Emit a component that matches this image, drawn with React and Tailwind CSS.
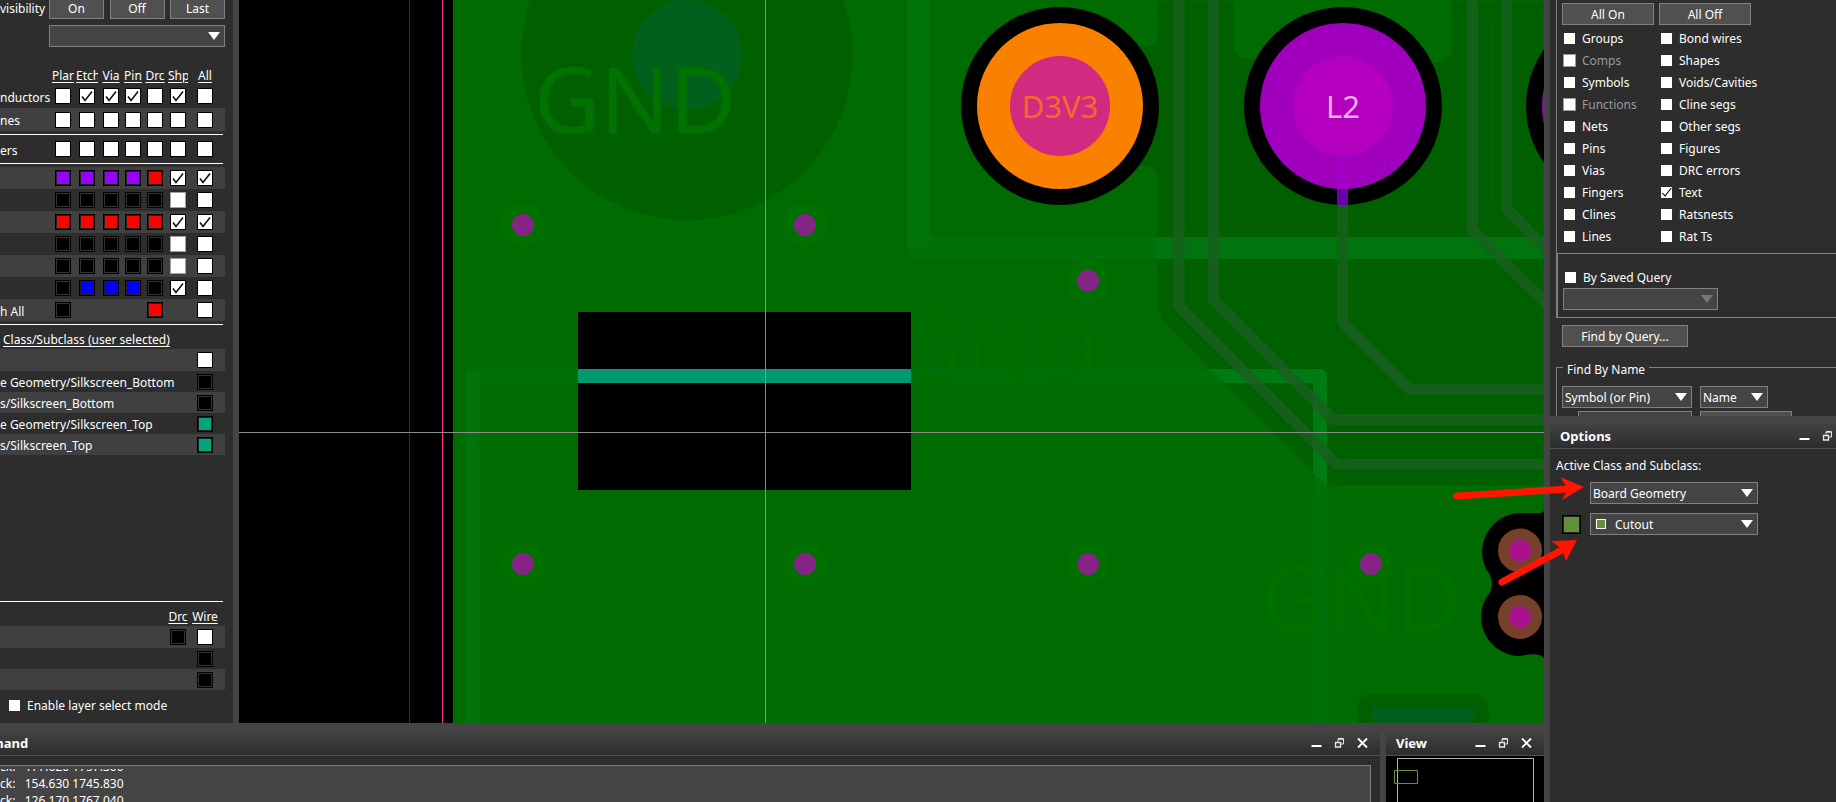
import React from "react";

const FONT = "font-['Noto_Sans','Open_Sans',sans-serif]";

const Check = ({ size = 16 }) => (
  <svg
    viewBox="0 0 16 16"
    className="pointer-events-none absolute inset-0 h-full w-full"
    aria-hidden="true"
  >
    <path
      d={size === 16 ? "M3 8.5 L6 12.5 L13 3.5" : "M2 9 L6 13 L15 1.5"}
      fill="none"
      stroke="#111"
      strokeWidth="1.6"
    />
  </svg>
);

const FILLS = {
  w: "bg-white border border-black",
  g: "bg-white border border-[#a0a0a0]",
  c: "bg-white border border-black",
  k: "bg-black border border-black shadow-[inset_0_0_0_1px_#333]",
  p: "bg-[#9900ff] border border-black shadow-[inset_0_0_0_1px_#222]",
  r: "bg-[#ff0000] border border-black shadow-[inset_0_0_0_1px_#222]",
  b: "bg-[#0000ff] border border-black shadow-[inset_0_0_0_1px_#222]",
  t: "bg-[#00a67a] border border-black shadow-[inset_0_0_0_1px_#222]",
};

function Box({ kind, label }) {
  if (kind === "-") return null;
  return (
    <span className="relative mx-auto block size-4">
      <input
        type="checkbox"
        aria-label={label}
        defaultChecked={kind === "c"}
        className={`block size-4 appearance-none ${FILLS[kind]}`}
      />
      {kind === "c" && <Check />}
    </span>
  );
}

const COLS = ["Plan", "Etch", "Via", "Pin", "Drc", "Shp", "All"];
const COL_WIDTHS = ["w-6", "w-6", "w-6", "w-5", "w-6", "w-[22px]", "w-8"];

function Rule({ span }) {
  return (
    <tr>
      <td colSpan={span} className="h-[7px] p-0 pr-[2px]">
        <div className="h-px bg-white" />
      </td>
    </tr>
  );
}

function LayerRow({ name, boxes, shade, height = "h-[22px]" }) {
  return (
    <tr className={shade ? "bg-[#404040]" : ""}>
      <th scope="row" className={`${height} p-0 pt-[3px] text-left font-normal whitespace-nowrap`}>
        {name}
      </th>
      {boxes.split("").map((k, i) => (
        <td key={i} className="p-0">
          <Box kind={k} label={COLS[i]} />
        </td>
      ))}
      <td className="p-0" />
    </tr>
  );
}

function PushButton({ children, className }) {
  return (
    <button className={`h-[22px] border border-[#808080] bg-[#505050] pt-[2px] leading-4 ${className}`}>
      {children}
    </button>
  );
}

function Drop({ label, options, className, disabled, pad = "pl-[2px]" }) {
  return (
    <span className={`relative block h-[22px] ${className}`}>
      <select
        aria-label={label}
        disabled={disabled}
        className={`block h-full w-full appearance-none border border-[#808080] bg-[#444] pt-[2px] ${pad}`}
      >
        {options.map((o) => (
          <option key={o}>{o}</option>
        ))}
      </select>
      <svg
        viewBox="0 0 12 8"
        className="pointer-events-none absolute top-[7px] right-[5px] h-2 w-3"
        aria-hidden="true"
      >
        <path d="M0 0 H12 L6 8 Z" fill={disabled ? "#777" : "#fff"} />
      </svg>
    </span>
  );
}

function LabeledCheck({ label, checked, disabled }) {
  return (
    <label className={`flex h-[22px] items-center ${disabled ? "text-[#999]" : ""}`}>
      <span className="relative mr-[7px] block size-[11px]">
        <input
          type="checkbox"
          defaultChecked={checked}
          disabled={disabled}
          className={`block size-[11px] appearance-none bg-white ${disabled ? "outline outline-[#999]" : ""}`}
        />
        {checked && <Check size={11} />}
      </span>
      <span className="pt-[2px]">{label}</span>
    </label>
  );
}

function VisibilityPanel() {
  return (
    <section className="flex w-[233px] shrink-0 flex-col overflow-hidden bg-[#2d2d2d]">
      <div className="-mt-[3px] flex h-[22px] w-[225px] shrink-0 items-center">
        <span className="w-[49px] shrink-0 pt-[2px] pr-[6px] text-right whitespace-nowrap">visibility</span>
        <div className="flex flex-1 justify-between">
          <PushButton className="w-[55px]">On</PushButton>
          <PushButton className="w-[55px]">Off</PushButton>
          <PushButton className="w-[55px]">Last</PushButton>
        </div>
      </div>
      <div className="mt-[6px] w-[225px] pl-[49px]">
        <Drop label="View" options={[""]} />
      </div>
      <table className="mt-[18px] w-[225px] table-fixed border-collapse">
        <colgroup>
          <col className="w-[51px]" />
          {COL_WIDTHS.map((w, i) => (
            <col key={i} className={w} />
          ))}
          <col className="w-1" />
        </colgroup>
        <thead>
          <tr className="h-[19px]">
            <td className="p-0" />
            {COLS.map((c) => (
              <th key={c} className="px-px pt-[3px] pb-0 text-center font-normal">
                <div className="overflow-hidden leading-4 whitespace-nowrap underline underline-offset-2">{c}</div>
              </th>
            ))}
            <td className="p-0" />
          </tr>
        </thead>
        <tbody>
          <LayerRow name="nductors" boxes="wcccwcw" height="h-6" />
          <LayerRow name="nes" boxes="wwwwwww" shade height="h-[23px]" />
          <Rule span={9} />
          <LayerRow name="ers" boxes="wwwwwww" />
          <Rule span={9} />
          <LayerRow boxes="pppprcc" shade />
          <LayerRow boxes="kkkkkgw" />
          <LayerRow boxes="rrrrrcc" shade />
          <LayerRow boxes="kkkkkgw" />
          <LayerRow boxes="kkkkkgw" shade />
          <LayerRow boxes="kbbbkcw" />
          <LayerRow name="h All" boxes="k---r-w" shade />
          <Rule span={9} />
        </tbody>
      </table>
      <table className="w-[225px] table-fixed border-collapse">
        <colgroup>
          <col />
          <col className="w-8" />
          <col className="w-1" />
        </colgroup>
        <thead>
          <tr>
            <th colSpan={3} className="h-[21px] p-0 pt-[2px] pl-[3px] text-left font-normal underline underline-offset-2">
              Class/Subclass (user selected)
            </th>
          </tr>
        </thead>
        <tbody>
          {[
            ["", "w"],
            ["e Geometry/Silkscreen_Bottom", "k"],
            ["s/Silkscreen_Bottom", "k"],
            ["e Geometry/Silkscreen_Top", "t"],
            ["s/Silkscreen_Top", "t"],
          ].map(([name, kind], i) => (
            <tr key={i} className={i % 2 === 0 ? "bg-[#404040]" : ""}>
              <td className={`${i === 0 ? "h-[22px]" : "h-[21px]"} p-0 pt-[2px] whitespace-nowrap`}>{name}</td>
              <td className="p-0">
                <Box kind={kind} label={name || "All"} />
              </td>
              <td className="p-0" />
            </tr>
          ))}
        </tbody>
      </table>
      <table className="mt-auto w-[225px] table-fixed border-collapse">
        <colgroup>
          <col />
          <col className="w-[22px]" />
          <col className="w-8" />
          <col className="w-1" />
        </colgroup>
        <thead>
          <Rule span={4} />
          <tr>
            <td className="h-[21px] p-0" />
            <th className="p-0 pt-[2px] font-normal underline underline-offset-2">Drc</th>
            <th className="p-0 pt-[2px] font-normal underline underline-offset-2">Wire</th>
            <td className="p-0" />
          </tr>
        </thead>
        <tbody>
          {["kw", "-k", "-k"].map((b, i) => (
            <tr key={i} className={i % 2 === 0 ? "bg-[#404040]" : ""}>
              <td className={`${i === 0 ? "h-[22px]" : "h-[21px]"} p-0`} />
              <td className="p-0">
                <Box kind={b[0]} label="Drc" />
              </td>
              <td className="p-0">
                <Box kind={b[1]} label="Wire" />
              </td>
              <td className="p-0" />
            </tr>
          ))}
        </tbody>
      </table>
      <div className="mt-1 mb-[7px] pl-[9px]">
        <LabeledCheck label="Enable layer select mode" />
      </div>
    </section>
  );
}

const VIAS = [
  [523, 225], [805, 225], [1088, 281],
  [523, 564], [805, 564], [1088, 564], [1371, 564],
];

function BoardCanvas() {
  return (
    <svg
      viewBox="239 0 1305 723"
      preserveAspectRatio="xMinYMin slice"
      className="block min-w-0 flex-1 bg-black font-['Noto_Sans',sans-serif]"
      role="img"
      aria-label="Board layout"
    >
      <rect x="453" y="0" width="1091" height="723" fill="#006b00" />
      <path
        d="M1157 0 V34 Q1157 46 1147 46 L1120 46 V167 H1147 Q1157 168 1157 180 V300 Q1157 315 1167 326 L1315 475 Q1325 486 1340 486.500 H1544 V0 Z"
        fill="#006000" stroke="#007000" strokeWidth="1"
      />
      <path d="M1235 0 V46 Q1236 58 1248 58 L1430 61 Q1451 64 1451 48 V0 Z" fill="#006b00" stroke="#006f00" />

      <circle cx="687" cy="54.500" r="166.500" fill="#006000" stroke="#007000" />
      <circle cx="687" cy="55" r="55" fill="#00601c" />

      <path d="M918 0 V248 H1157" fill="none" stroke="#007008" strokeWidth="22" strokeLinejoin="round" />
      <rect x="907" y="0" width="22" height="248" fill="#00740b" />
      <rect x="1157" y="237" width="387" height="22" fill="#00740e" />

      <path d="M472 723 V376 H1320 V723" fill="none" stroke="#007108" strokeWidth="14" strokeLinejoin="round" />
      <path d="M472 723 V376" stroke="#00740a" strokeWidth="14" strokeLinecap="round" />
      <path d="M1211 369 H1320 Q1327 369 1327 376 V485 L1313 473 V383 H1225 Z" fill="#007a12" />

      <g fill="none" stroke="#186020" strokeOpacity="0.85" strokeWidth="11" strokeLinejoin="round">
        <path d="M1179 0 V306 L1337 464.500 H1544" />
        <path d="M1213.500 0 V300 L1333 419.500 H1544" />
        <path d="M1342.500 205 V322 L1410 389.500 H1544" />
        <path d="M1472.500 0 V230 L1550 307.500" />
        <path d="M1506.500 0 V209 L1550 252.500" />
      </g>

      {VIAS.map(([x, y]) => (
        <circle key={`${x}-${y}`} cx={x} cy={y} r="22" fill="#007000" />
      ))}
      <g fill="#007200" fontSize="91">
        <text x="534" y="133">GND</text>
        <text x="897" y="382" fill="#006f00">GND</text>
        <text x="1260" y="632" fill="#007000">GND</text>
      </g>
      {VIAS.map(([x, y]) => (
        <circle key={`${x}-${y}`} cx={x} cy={y} r="11" fill="#842484" />
      ))}

      <rect x="578" y="312" width="333" height="178" fill="#000" />
      <rect x="578" y="369" width="333" height="14" fill="#009970" />

      <circle cx="1060" cy="106" r="99" fill="#000" />
      <circle cx="1060" cy="106" r="83" fill="#fa8000" />
      <circle cx="1060" cy="106" r="50" fill="#d22a80" />
      <circle cx="1343" cy="106" r="99" fill="#000" />
      <rect x="1337" y="180" width="11" height="25" fill="#6a00ac" />
      <circle cx="1343" cy="106" r="83" fill="#a000be" />
      <circle cx="1343" cy="106" r="50" fill="#b400be" />
      <rect x="1337" y="155" width="11" height="34" fill="#a000c6" />
      <circle cx="1625" cy="106" r="99" fill="#000" />
      <circle cx="1625" cy="106" r="83" fill="#a000be" />
      <g fontSize="31" textAnchor="middle">
        <text x="1060" y="118" fill="#f4682c">D3V3</text>
        <text x="1343" y="118" fill="#e9aeec">L2</text>
      </g>

      <path
        d="M1544 511 L1541 513 H1520 A39 39 0 0 0 1486 569 Q1498 584 1486 598 A39 39 0 0 0 1520 656 Q1534 653 1540 655 L1544 658 Z"
        fill="#000"
      />
      {[550.5, 617].map((y) => (
        <g key={y}>
          <circle cx="1520" cy={y} r="22" fill="#77402b" />
          <circle cx="1520" cy={y} r="11" fill="#a8128f" />
        </g>
      ))}

      <path d="M1356.500 723 V708 Q1358 692.500 1374 692.500 H1472 Q1488 693 1489.500 708 V723" fill="#006000" stroke="#007000" />
      <rect x="1372" y="708" width="101" height="15" fill="#00601c" />

      <rect x="409" y="0" width="1" height="723" fill="#80004c" />
      <rect x="442" y="0" width="1" height="723" fill="#ff3399" />
      <rect x="765" y="0" width="1" height="723" fill="#8c8c8c" />
      <rect x="239" y="432" width="1305" height="1" fill="#8c8c8c" />
    </svg>
  );
}

function Arrows() {
  return (
    <svg
      viewBox="0 0 130 110"
      className="pointer-events-none absolute top-[480px] right-[252px] h-[110px] w-[130px] overflow-visible"
      aria-hidden="true"
    >
      <g stroke="#ff1500" strokeWidth="7" strokeLinecap="round">
        <path d="M3 16 L114 9" />
        <path d="M48 102 L108 70" />
      </g>
      <path d="M106 -3 L130 7 L108 20 L114 9 Z" fill="#ff1500" />
      <path d="M97 61 L123 60 L112 81 L108 69 Z" fill="#ff1500" />
    </svg>
  );
}

const iconButton = "flex h-4 w-[13px] items-center justify-center";

function PaneHeader({ title, closable = true, className = "", titleClass = "" }) {
  return (
    <header
      className={`flex h-[33px] shrink-0 items-center gap-[10px] overflow-hidden border-b border-[#505050] bg-linear-to-b from-[#444] from-20% to-[#2d2d2d] pt-2 ${className}`}
    >
      <h2 className={`flex-1 text-[13px] leading-4 font-bold ${titleClass}`}>{title}</h2>
      <button className={iconButton} aria-label="Minimize">
        <svg viewBox="0 0 13 13" className="size-[13px]">
          <path d="M1.500 9 H11.500" stroke="#fff" strokeWidth="2" />
        </svg>
      </button>
      <button className={iconButton} aria-label="Float">
        <svg viewBox="0 0 13 13" className="size-[13px]" fill="none" stroke="#e8e8e8">
          <path d="M5 4.500 V2 H10.500 V7 H8" />
          <path d="M5 1.700 H10.500" strokeWidth="1.500" />
          <path d="M2.500 5.500 H7.500 V10 H2.500 Z" strokeWidth="1.300" />
        </svg>
      </button>
      {closable && (
        <button className={iconButton} aria-label="Close">
          <svg viewBox="0 0 13 13" className="size-[13px]">
            <path d="M2 1.500 L11 10.500 M11 1.500 L2 10.500" stroke="#fff" strokeWidth="1.800" />
          </svg>
        </button>
      )}
    </header>
  );
}

function CommandPane() {
  return (
    <section className="flex min-w-0 flex-1 flex-col bg-[#2d2d2d]">
      <PaneHeader title="mand" className="pr-[11px]" titleClass="-ml-[9px]" />
      <div className="mt-[9px] mr-[9px] flex-1 overflow-hidden border-t border-r border-[#808080] bg-[#444] pt-[3px]">
        <div className="h-full overflow-hidden">
          <div className="-mt-[11px] leading-[17px] whitespace-pre">
            <p>ck:   177.620 1757.300</p>
            <p>ck:   154.630 1745.830</p>
            <p>ck:   126.170 1767.040</p>
          </div>
        </div>
      </div>
    </section>
  );
}

function ViewPane() {
  return (
    <section className="flex w-[158px] shrink-0 flex-col bg-black">
      <PaneHeader title="View" className="pr-[11px] pl-[10px]" />
      <svg viewBox="0 0 158 46" className="h-[46px] w-full" fill="none" aria-hidden="true">
        <path d="M11.500 46 V2.500 H147.500 V46" stroke="#b4b4b4" />
        <path d="M8.500 14.500 H31.500 V27.500 H8.500 Z" stroke="#6a913c" />
      </svg>
    </section>
  );
}

const FIND_LEFT = ["Groups", "Comps", "Symbols", "Functions", "Nets", "Pins", "Vias", "Fingers", "Clines", "Lines"];
const FIND_RIGHT = ["Bond wires", "Shapes", "Voids/Cavities", "Cline segs", "Other segs", "Figures", "DRC errors", "Text", "Ratsnests", "Rat Ts"];

function FindPanel() {
  return (
    <section className="h-[416px] shrink-0 overflow-hidden pl-[6px]">
      <div className="border-l border-[#808080] pt-[3px] pb-[6px] pl-[5px]">
        <div className="flex gap-[5px]">
          <PushButton className="w-[92px]">All On</PushButton>
          <PushButton className="w-[92px]">All Off</PushButton>
        </div>
        <div className="mt-[2px] flex pl-[2px]">
          <div className="w-[97px]">
            {FIND_LEFT.map((l) => (
              <LabeledCheck key={l} label={l} disabled={l === "Comps" || l === "Functions"} />
            ))}
          </div>
          <div>
            {FIND_RIGHT.map((l) => (
              <LabeledCheck key={l} label={l} checked={l === "Text"} />
            ))}
          </div>
        </div>
      </div>
      <div className="h-[65px] border-y border-l-2 border-[#808080] pt-3 pl-[5px]">
        <div className="pl-[2px]">
          <LabeledCheck label="By Saved Query" />
        </div>
        <Drop label="Saved query" options={[""]} disabled className="w-[155px]" />
      </div>
      <PushButton className="mt-[7px] ml-[6px] block w-[126px]">Find by Query...</PushButton>
      <fieldset className="mt-3 border-t border-l border-[#808080] pl-[5px]">
        <legend className="ml-[1px] h-4 px-1 pt-[3px] leading-4">Find By Name</legend>
        <div className="mt-[11px] flex gap-2">
          <Drop label="Object type" options={["Symbol (or Pin)"]} className="w-[130px]" />
          <Drop label="Name type" options={["Name"]} className="w-[68px]" />
        </div>
        <div className="mt-[3px] flex gap-2 pl-4">
          <input aria-label="Name value" className="h-[22px] w-[114px] border border-[#808080] bg-[#444]" />
          <PushButton className="w-[92px]">More...</PushButton>
        </div>
      </fieldset>
    </section>
  );
}

function OptionsPanel() {
  return (
    <section className="flex-1">
      <PaneHeader title="Options" closable={false} className="pr-0.5 pl-[10px]" />
      <div className="pt-[7px] pl-[6px]">
        <p className="leading-5">Active Class and Subclass:</p>
        <div className="mt-[6px] pl-[34px]">
          <Drop label="Active class" options={["Board Geometry"]} className="w-[168px]" />
        </div>
        <div className="mt-[9px] flex items-center gap-[9px] pl-[6px]">
          <button aria-label="Subclass color" className="size-[19px] border border-black bg-[#65903a] shadow-[inset_0_0_0_1px_#222]" />
          <span className="relative block">
            <Drop label="Active subclass" options={["Cutout"]} className="w-[168px]" pad="pl-6" />
            <span className="pointer-events-none absolute top-[6px] left-[6px] size-[10px] border border-white bg-[#65903a]" />
          </span>
        </div>
      </div>
    </section>
  );
}

export default function App() {
  return (
    <main className={`relative flex h-screen w-full gap-[6px] overflow-hidden bg-[#444] text-xs text-white ${FONT}`}>
      <div className="flex min-w-0 flex-1 flex-col">
        <div className="flex min-h-0 flex-1 gap-[6px]">
          <VisibilityPanel />
          <BoardCanvas />
        </div>
        <div className="flex h-[79px] shrink-0 gap-[6px]">
          <CommandPane />
          <ViewPane />
        </div>
      </div>
      <aside className="flex w-[286px] shrink-0 flex-col overflow-hidden bg-[#2d2d2d]">
        <FindPanel />
        <OptionsPanel />
      </aside>
      <Arrows />
    </main>
  );
}
